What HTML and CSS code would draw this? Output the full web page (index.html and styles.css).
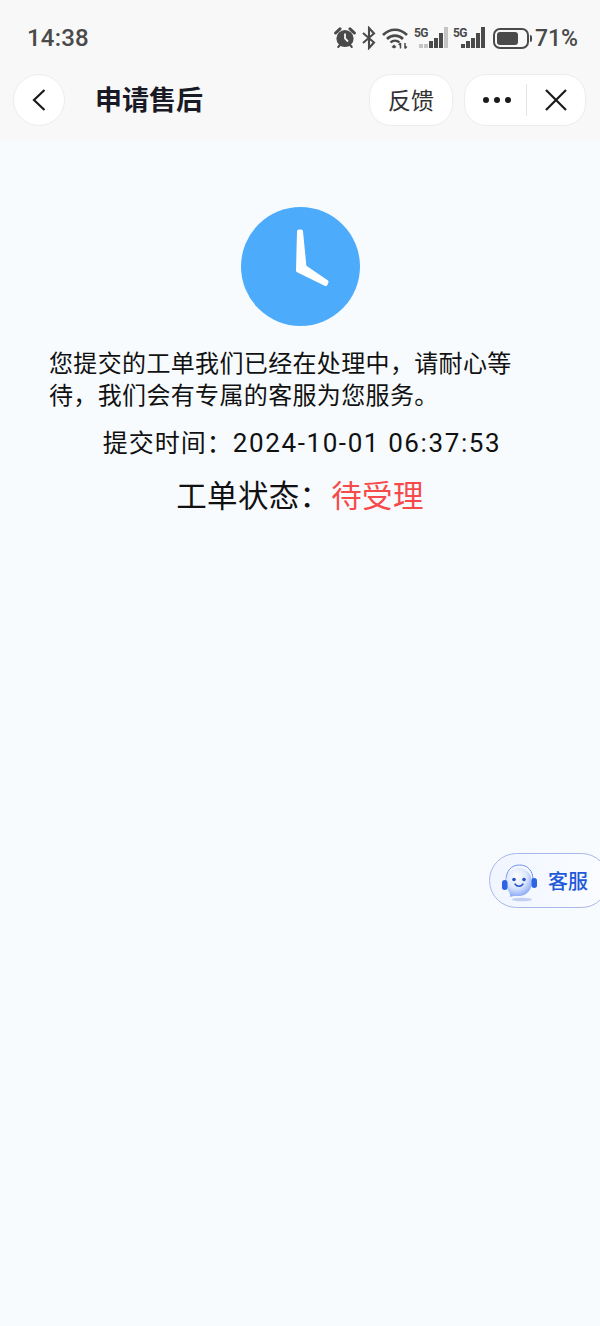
FILE: index.html
```html
<!DOCTYPE html>
<html lang="zh-CN">
<head>
  <meta charset="UTF-8" />
  <meta name="viewport" content="width=device-width, initial-scale=1.0"/>
  <title>申请售后</title>
  <link rel="stylesheet" href="styles.css">
</head>
<body>
  <div class="header">
    <div class="status-bar">
      <span class="time">14:38</span>
      <div class="status-icons">
        <!-- alarm -->
        <svg width="22" height="22" viewBox="0 0 22 22">
          <circle cx="11" cy="11.5" r="8.6" fill="#4a4a4a"/>
          <path d="M1.6 6 L6 1.8 M20.4 6 L16 1.8" stroke="#4a4a4a" stroke-width="3" stroke-linecap="round"/>
          <path d="M4.2 20 L6 18 M17.8 20 L16 18" stroke="#4a4a4a" stroke-width="2" stroke-linecap="round"/>
          <path d="M11 6.5 V11.5 L14 14.5" fill="none" stroke="#f8f8f8" stroke-width="1.8"/>
        </svg>
        <!-- bluetooth -->
        <svg width="16" height="24" viewBox="0 0 16 24">
          <path d="M2 7 L13 16.5 L8 22 V2 L13 7.5 L2 17" fill="none" stroke="#4a4a4a" stroke-width="2.1"/>
        </svg>
        <!-- wifi -->
        <svg width="27" height="22" viewBox="0 0 27 22">
          <path d="M1 8 C8 1 18 1 25 8" fill="none" stroke="#4a4a4a" stroke-width="2.6"/>
          <path d="M5 12 C9.5 7.5 16.5 7.5 21 12" fill="none" stroke="#4a4a4a" stroke-width="2.6"/>
          <path d="M8.5 15.5 C11 13 15 13 17.5 15.5" fill="none" stroke="#4a4a4a" stroke-width="2.4"/>
          <path d="M9.5 20 L12 17.6 L14.5 20 L12 21.5 Z" fill="#4a4a4a"/>
          <path d="M18.5 21.5 V16 M16.8 18 L18.5 16 M23 16 V21.5 M23 21.5 L24.8 19.5" fill="none" stroke="#4a4a4a" stroke-width="1.5"/>
        </svg>
        <div class="signal wide">
          <span class="net">5G</span>
          <div class="bars">
            <i class="bar b1 dim"></i><i class="bar b1 dim"></i><i class="bar b2"></i><i class="bar b3"></i><i class="bar b4"></i><i class="bar b5 dim"></i>
          </div>
        </div>
        <div class="signal">
          <span class="net">5G</span>
          <div class="bars">
            <i class="bar b1"></i><i class="bar b2"></i><i class="bar b3"></i><i class="bar b4"></i><i class="bar b5"></i>
          </div>
        </div>
        <div class="battery">
          <div class="battery-body"><div class="battery-level"></div></div>
          <div class="battery-tip"></div>
        </div>
        <span class="percent">71%</span>
      </div>
    </div>
    <div class="nav-bar">
      <div class="back-btn">
        <svg width="18" height="26" viewBox="0 0 18 26">
          <path d="M14.5 3 L4 13 L14.5 23" fill="none" stroke="#1a1a1a" stroke-width="2.2"/>
        </svg>
      </div>
      <h1 class="nav-title">申请售后</h1>
      <div class="feedback-btn">反馈</div>
      <div class="capsule">
        <div class="capsule-item more">
          <span class="dot"></span><span class="dot"></span><span class="dot"></span>
        </div>
        <div class="capsule-line"></div>
        <div class="capsule-item">
          <svg width="24" height="24" viewBox="0 0 24 24">
            <path d="M2 2 L22 22 M22 2 L2 22" stroke="#1a1a1a" stroke-width="2.2"/>
          </svg>
        </div>
      </div>
    </div>
  </div>

  <div class="content">
    <div class="clock">
      <svg width="119" height="119" viewBox="0 0 119 119">
        <circle cx="59.5" cy="59.5" r="59.5" fill="#4dabfb"/>
        <path d="M58 24.5 L60 24.5 L63.5 60 L85.5 75 L84.5 77 L57 63.5 Z" fill="#fff" stroke="#fff" stroke-width="4" stroke-linejoin="round"/>
      </svg>
    </div>
    <p class="notice">您提交的工单我们已经在处理中，请耐心等待，我们会有专属的客服为您服务。</p>
    <p class="submit-time"><span class="submit-label">提交时间：</span>2024-10-01 06:37:53</p>
    <p class="order-status">工单状态：<span class="pending">待受理</span></p>
  </div>

  <div class="service-tab">
    <svg width="38" height="42" viewBox="0 0 38 42">
      <defs>
        <radialGradient id="ball" cx="0.4" cy="0.3" r="0.8">
          <stop offset="0" stop-color="#ffffff"/>
          <stop offset="0.5" stop-color="#dbe6fd"/>
          <stop offset="1" stop-color="#6d95f2"/>
        </radialGradient>
      </defs>
      <ellipse cx="21" cy="39.5" rx="10" ry="1.8" fill="#c3cff0"/>
      <path d="M5 21 C5 11 10 5 18.5 5 C27 5 32 11 32 20" fill="none" stroke="#6f90ec" stroke-width="1"/>
      <path d="M5 22 C5 14 11 8 18 8 C25 8 31 14 31 22 C31 30 25 36 18 36 C15 36 12 35.5 9 37 C9.5 34 8.5 33 7.5 31 C5.8 28.5 5 25.5 5 22 Z" fill="url(#ball)"/>
      <rect x="1" y="20" width="5.5" height="10" rx="2.7" fill="#2f63e6"/>
      <rect x="30.5" y="18" width="5.5" height="10" rx="2.7" fill="#2f63e6"/>
      <circle cx="13" cy="19.5" r="1.8" fill="#2450c8"/>
      <circle cx="23" cy="19.5" r="1.8" fill="#2450c8"/>
      <path d="M14 24 C16 27 20 27 22 24" fill="none" stroke="#2450c8" stroke-width="1.4" stroke-linecap="round"/>
    </svg>
    <span class="service-label">客服</span>
  </div>
</body>
</html>
```

FILE: styles.css
```css
* {
  box-sizing: border-box;
}
body {
  margin: 0;
  min-height: 1326px;
  background: #f7fbfe;
  font-family: "Noto Sans CJK SC", "Noto Sans", sans-serif;
  color: #111;
  position: relative;
  overflow: hidden;
}
.header {
  background: #f8f8f8;
  height: 141px;
}
.status-bar {
  height: 72px;
  padding: 4px 22px 0 27px;
  display: flex;
  align-items: center;
  justify-content: space-between;
  color: #4a4a4a;
}
.time {
  font-family: Roboto, sans-serif;
  font-size: 24px;
  font-weight: 500;
  letter-spacing: 0.2px;
}
.status-icons {
  display: flex;
  align-items: center;
  gap: 5px;
}
.signal {
  position: relative;
  width: 32px;
  height: 22px;
}
.signal.wide {
  width: 34px;
}
.net {
  position: absolute;
  left: 0;
  top: 0;
  font-family: Roboto, sans-serif;
  font-size: 12px;
  font-weight: 700;
  line-height: 12px;
  letter-spacing: -0.5px;
}
.bars {
  position: absolute;
  right: 0;
  bottom: 1px;
  display: flex;
  align-items: flex-end;
  gap: 1.5px;
}
.bar {
  display: block;
  width: 3.5px;
  background: #4a4a4a;
}
.bar.dim {
  background: #c4c4c4;
}
.b1 { height: 4px; }
.b2 { height: 7px; }
.b3 { height: 10px; }
.b4 { height: 15px; }
.b5 { height: 21px; }
.battery {
  display: flex;
  align-items: center;
  margin-left: 3px;
}
.battery-body {
  width: 36px;
  height: 21px;
  border: 2px solid #4a4a4a;
  border-radius: 7px;
  padding: 2px;
}
.battery-level {
  width: 75%;
  height: 100%;
  background: #4a4a4a;
  border-radius: 3px;
}
.battery-tip {
  width: 2px;
  height: 7px;
  margin-left: 1px;
  background: #4a4a4a;
  border-radius: 0 2px 2px 0;
}
.percent {
  margin-left: -2px;
  font-family: Roboto, sans-serif;
  font-size: 23px;
  font-weight: 500;
}
.nav-bar {
  height: 56px;
  padding: 0 14px 0 13px;
  display: flex;
  align-items: center;
}
.back-btn {
  width: 52px;
  height: 52px;
  border-radius: 50%;
  background: #fff;
  border: 1px solid #ececec;
  display: flex;
  align-items: center;
  justify-content: center;
}
.nav-title {
  margin: 0 0 0 30px;
  padding-bottom: 4px;
  flex: 1;
  font-size: 27px;
  font-weight: 700;
  color: #1a1a26;
}
.feedback-btn {
  width: 84px;
  height: 52px;
  padding-bottom: 3px;
  border-radius: 22px;
  background: #fff;
  border: 1px solid #ececec;
  font-size: 23px;
  color: #333;
  display: flex;
  align-items: center;
  justify-content: center;
}
.capsule {
  width: 122px;
  height: 52px;
  margin-left: 11px;
  border-radius: 22px;
  background: #fff;
  border: 1px solid #ececec;
  display: flex;
  align-items: center;
}
.capsule-item {
  flex: 1;
  display: flex;
  align-items: center;
  justify-content: center;
  gap: 5px;
}
.capsule-item.more {
  padding-left: 3px;
}
.capsule-line {
  width: 1px;
  height: 32px;
  background: #e4e4e4;
}
.dot {
  width: 6px;
  height: 6px;
  border-radius: 50%;
  background: #1a1a1a;
}
.content {
  padding: 66px 50px 0;
}
.clock {
  display: flex;
  justify-content: center;
  height: 119px;
}
.notice {
  margin: 20px 28px 0 -1px;
  font-size: 24px;
  line-height: 32px;
  letter-spacing: 0.35px;
}
.submit-time {
  margin: 13px -49px 0 -45px;
  text-align: center;
  font-family: Roboto, "Noto Sans CJK SC", sans-serif;
  font-size: 26px;
  line-height: 36px;
  letter-spacing: 1.6px;
}
.submit-label {
  font-family: "Noto Sans CJK SC", sans-serif;
  font-size: 25px;
  letter-spacing: 1px;
}
.order-status {
  margin: 11px -50px 0;
  text-align: center;
  font-size: 30.5px;
  line-height: 44px;
  letter-spacing: 0.3px;
}
.pending {
  margin-left: 1px;
  color: #f74a4a;
}
.service-tab {
  position: absolute;
  left: 489px;
  top: 853px;
  width: 120px;
  height: 55px;
  padding-left: 11px;
  display: flex;
  align-items: center;
  gap: 9px;
  background: linear-gradient(90deg, #f0f5ff, #fbfdff);
  border: 1px solid #a9b7ea;
  border-radius: 28px;
}
.service-label {
  font-size: 20px;
  font-weight: 500;
  color: #2159d8;
}
```
